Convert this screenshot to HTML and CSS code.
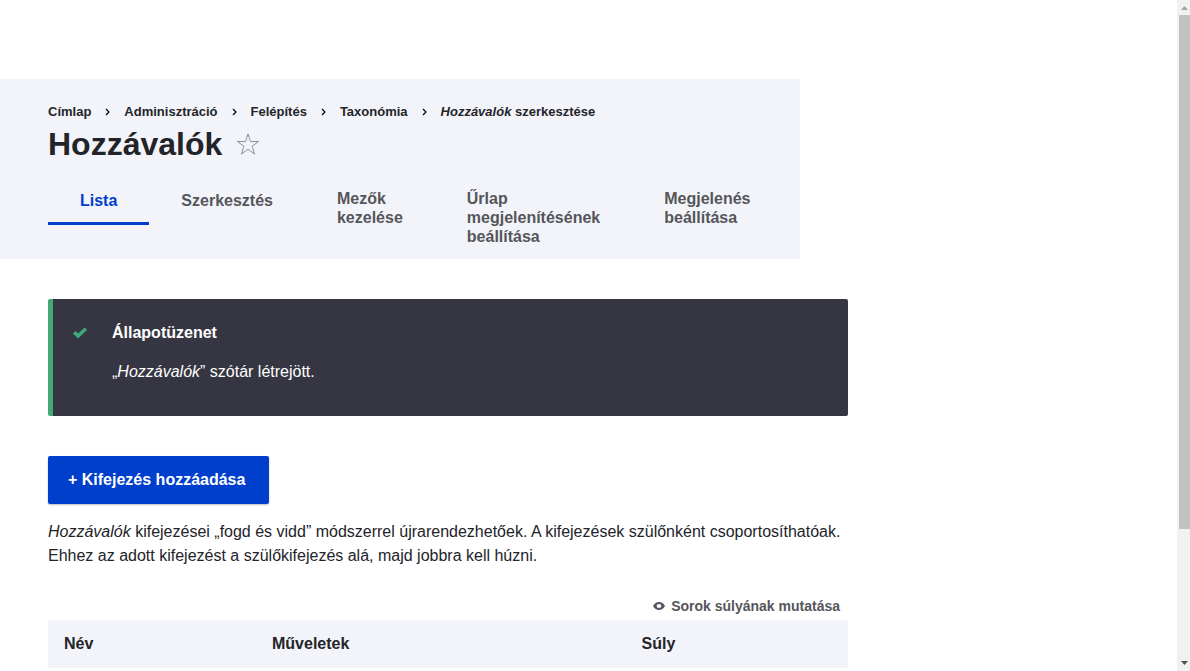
FILE: index.html
```html
<!DOCTYPE html>
<html lang="hu">
<head>
<meta charset="utf-8">
<meta name="viewport" content="width=device-width, initial-scale=1">
<title>Hozzávalók</title>
<link rel="stylesheet" href="styles.css">
</head>
<body>
<div class="window">
  <div class="page">
    <header class="page-header">
      <nav aria-label="Morzsa">
        <ol class="breadcrumb">
          <li><a href="#">Címlap</a></li>
          <li><svg class="chevron" viewBox="0 0 5 8" aria-hidden="true"><path d="M1 1l3 3-3 3"/></svg><a href="#">Adminisztráció</a></li>
          <li><svg class="chevron" viewBox="0 0 5 8" aria-hidden="true"><path d="M1 1l3 3-3 3"/></svg><a href="#">Felépítés</a></li>
          <li><svg class="chevron" viewBox="0 0 5 8" aria-hidden="true"><path d="M1 1l3 3-3 3"/></svg><a href="#">Taxonómia</a></li>
          <li><svg class="chevron" viewBox="0 0 5 8" aria-hidden="true"><path d="M1 1l3 3-3 3"/></svg><a href="#"><em>Hozzávalók</em> szerkesztése</a></li>
        </ol>
      </nav>
      <div class="title-row">
        <h1>Hozzávalók</h1>
        <a class="shortcut" href="#" aria-label="Gyorshivatkozás hozzáadása"><svg viewBox="0 0 24 24" aria-hidden="true"><path d="M12 1.800l2.500 7.700h8.100l-6.500 4.700 2.500 7.900-6.600-4.900-6.600 4.900 2.500-7.900-6.500-4.700h8.100z"/></svg></a>
      </div>
      <nav class="tabs" aria-label="Fülek">
        <a class="tab tab-active" href="#" aria-current="page">Lista</a>
        <a class="tab" href="#">Szerkesztés</a>
        <a class="tab" href="#">Mezők kezelése</a>
        <a class="tab" href="#">Űrlap megjelenítésének beállítása</a>
        <a class="tab" href="#">Megjelenés beállítása</a>
      </nav>
    </header>
    <main class="content">
      <section class="message" role="status">
        <svg class="check" viewBox="0 0 16 16" aria-hidden="true"><path d="M2.200 8.200l3.800 3.800 7.800-7.200"/></svg>
        <div>
          <h2>Állapotüzenet</h2>
          <p>„<em>Hozzávalók</em>” szótár létrejött.</p>
        </div>
      </section>
      <a class="button" href="#">+ Kifejezés hozzáadása</a>
      <p class="help"><em>Hozzávalók</em> kifejezései „fogd és vidd” módszerrel újrarendezhetőek. A kifejezések szülőnként csoportosíthatóak. Ehhez az adott kifejezést a szülőkifejezés alá, majd jobbra kell húzni.</p>
      <div class="table-tools">
        <button class="toggle" type="button"><svg class="eye" viewBox="0 0 12 8" aria-hidden="true"><path fill-rule="evenodd" d="M0 4C1.500 1.200 3.500 0 6 0S10.500 1.200 12 4C10.500 6.800 8.500 8 6 8S1.500 6.800 0 4zM6 1.900a2.400 2.100 0 1 0 0 4.200 2.400 2.100 0 0 0 0-4.200z"/></svg>Sorok súlyának mutatása</button>
      </div>
      <table class="terms">
        <thead>
          <tr><th class="col-name" scope="col">Név</th><th class="col-ops" scope="col">Műveletek</th><th scope="col">Súly</th></tr>
        </thead>
      </table>
    </main>
  </div>
  <div class="scrollbar" aria-hidden="true">
    <svg class="arrow arrow-up" viewBox="0 0 7 4"><path d="M0 4h7L3.500 0z"/></svg>
    <div class="thumb"></div>
    <svg class="arrow" viewBox="0 0 7 4"><path d="M0 0h7L3.500 4z"/></svg>
  </div>
</div>
</body>
</html>
```
FILE: styles.css
```css
* { box-sizing: border-box; }
body {
  margin: 0;
  font-family: "Liberation Sans", Arial, sans-serif;
  font-size: 16px;
  line-height: 24px;
  color: #232429;
  background: #fff;
}
a { color: inherit; text-decoration: none; }
h1, h2, p, ol { margin: 0; padding: 0; }
.window {
  display: grid;
  grid-template-columns: minmax(0, 1fr) 13px;
  height: 100vh;
}
.page { padding-top: 79px; overflow: hidden; }
.page-header {
  max-width: 800px;
  padding: 24px 48px 0;
  background: #f3f4f9;
}
.breadcrumb {
  display: flex;
  list-style: none;
  font-size: 13px;
  line-height: 18px;
  font-weight: 700;
}
.breadcrumb li { display: flex; align-items: center; white-space: nowrap; }
.chevron {
  width: 5px;
  height: 8px;
  margin: 0 14px;
  fill: none;
  stroke: #000;
  stroke-width: 1.2;
}
.title-row { display: flex; align-items: center; gap: 14px; height: 46px; }
h1 { font-size: 32px; line-height: 46px; }
.shortcut { display: flex; }
.shortcut svg { width: 24px; height: 24px; fill: none; stroke: #8e929c; stroke-width: 1; }
.tabs { display: flex; align-items: flex-start; padding-top: 10px; }
.tab {
  display: flex;
  align-items: center;
  min-height: 48px;
  padding: 12px 32px;
  line-height: 1.2;
  font-weight: 700;
  color: #55565b;
}
.tab-active { color: #003ecc; box-shadow: inset 0 -3px #003ecc; }
.content { max-width: 848px; padding: 40px 0 0 48px; }
.message {
  display: flex;
  gap: 24px;
  min-height: 117px;
  padding: 22px 24px 32px 19px;
  border-left: 5px solid #42a877;
  border-radius: 2px;
  background: #353641;
  color: #fff;
}
.check { flex: none; width: 16px; height: 16px; margin-top: 3px; fill: none; stroke: #42a877; stroke-width: 3.6; }
h2 { font-size: 16px; line-height: 24px; }
.message p { margin-top: 15px; }
.button {
  display: inline-block;
  margin-top: 40px;
  padding: 12px 24px 12px 20px;
  border-radius: 2px;
  background: #003ecc;
  color: #fff;
  font-weight: 700;
  box-shadow: 0 1px 2px rgba(0, 0, 0, 0.25);
}
.help { margin-top: 16px; }
.table-tools { display: flex; justify-content: flex-end; margin-top: 26px; padding: 0 8px 2px; }
.toggle {
  display: flex;
  align-items: center;
  gap: 6px;
  padding: 0;
  border: 0;
  background: none;
  font: 700 14px/24px "Liberation Sans", Arial, sans-serif;
  color: #55565b;
}
.eye { width: 12px; height: 8px; fill: #545560; }
.terms { width: 100%; table-layout: fixed; border-collapse: collapse; }
.terms th { height: 48px; padding: 0 16px; text-align: left; background: #f3f4f9; }
.col-name { width: 26%; }
.col-ops { width: 46.2%; }
.scrollbar {
  display: flex;
  flex-direction: column;
  align-items: center;
  justify-content: space-between;
  padding: 6px 0;
  background: #f1f1f1;
}
.thumb { width: 11px; flex: 0 0 78%; margin: 5px 0 auto 2px; background: #c1c1c1; }
.arrow { flex: none; width: 7px; height: 4px; margin-left: 2px; fill: #505050; }
.arrow-up { fill: #a3a3a3; }
```
